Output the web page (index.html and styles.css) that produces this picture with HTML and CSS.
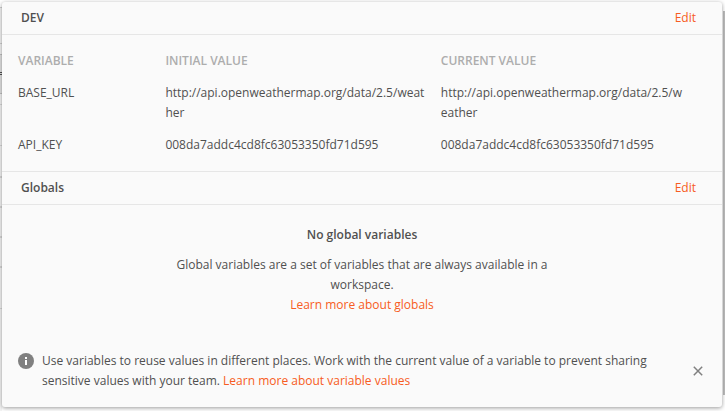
FILE: index.html
```html
<!DOCTYPE html>
<html lang="en">
<head>
<meta charset="utf-8">
<title>Environment quick look</title>
<link rel="stylesheet" href="styles.css">
</head>
<body>
<div class="backdrop"></div>
<main class="panel">
  <header class="section-header"><h2>DEV</h2><a class="link">Edit</a></header>
  <div class="variables">
    <span class="heading">VARIABLE</span><span class="heading">INITIAL VALUE</span><span class="heading">CURRENT VALUE</span>
    <span>BASE_URL</span><span>http://api.openweathermap.org/data/2.5/weat<br>her</span><span>http://api.openweathermap.org/data/2.5/w<br>eather</span>
    <span>API_KEY</span><span>008da7addc4cd8fc63053350fd71d595</span><span>008da7addc4cd8fc63053350fd71d595</span>
  </div>
  <header class="section-header globals-header"><h2>Globals</h2><a class="link">Edit</a></header>
  <section class="empty">
    <h3>No global variables</h3>
    <p>Global variables are a set of variables that are always available in a<br>workspace.<br><a class="link">Learn more about globals</a></p>
  </section>
  <footer class="tip">
    <svg class="info" viewBox="0 0 16 16"><circle cx="8" cy="8" r="8"/><path d="M7 4h2v2H7zM7 7h2v5H7z"/></svg>
    <p>Use variables to reuse values in different places. Work with the current value of a variable to prevent sharing<br>sensitive values with your team. <a class="link">Learn more about variable values</a></p>
    <svg class="close" viewBox="0 0 10 10"><path d="M.8.8l8.4 8.4M9.2.8L.8 9.2"/></svg>
  </footer>
</main>
<div class="scrollbar"></div>
</body>
</html>
```
FILE: styles.css
```css
* { box-sizing: border-box; }
body {
  margin: 0;
  height: 411px;
  padding: 2px 3px 4px 2px;
  overflow: hidden;
  background: #fff;
  font: 12px/20px "Open Sans", sans-serif;
  color: #505050;
}
h2, h3, p { margin: 0; font-size: 12px; }
h2, h3 { font-weight: 600; }

/* Edge of the page that shows behind the panel */
.backdrop {
  position: absolute;
  top: 0;
  left: 0;
  width: 2px;
  height: 411px;
  background: linear-gradient(
    #fff 7px, #d0d0d0 7px 8px, #f4f4f4 8px 43px, #d0d0d0 43px 44px,
    #f4f4f4 44px 54px, #c0c0c0 54px 55px, #e2e2e2 55px 72px,
    #505050 72px 73px, #e2e2e2 73px 74px, #505050 74px 75px,
    #e2e2e2 75px 93px, #c0c0c0 93px 94px, #f4f4f4 94px 104px,
    #d8d8d8 104px 105px, #f4f4f4 105px 145px, #d8d8d8 145px 146px,
    #f4f4f4 146px 176px, #d8d8d8 176px 178px, #f4f4f4 178px 206px,
    #d8d8d8 206px 208px, #f4f4f4 208px 236px, #d8d8d8 236px 238px,
    #f4f4f4 238px 266px, #d8d8d8 266px 268px, #f4f4f4 268px 308px,
    #d8d8d8 308px 309px, #f4f4f4 309px);
}
.panel {
  position: relative;
  z-index: 1;
  display: flex;
  flex-direction: column;
  width: 720px;
  height: 405px;
  background: #fafafa;
  border-radius: 3px;
  box-shadow: 0 1px 4px rgba(0, 0, 0, .4);
}
.link { color: #f75c22; }
.section-header {
  display: flex;
  flex: none;
  align-items: center;
  justify-content: space-between;
  height: 33px;
  padding: 0 26px 0 19px;
  border-bottom: 1px solid #e6e6e6;
}
.globals-header { height: 34px; border-top: 1px solid #e6e6e6; }
.variables {
  display: grid;
  grid-template-columns: 147.4px 275.4px 1fr;
  row-gap: 12px;
  padding: 16px;
}
.heading { font-weight: 600; color: #adadad; }
.empty { padding-top: 20px; text-align: center; }
.empty p { margin-top: 10px; }
.tip {
  display: flex;
  align-items: flex-start;
  margin-top: auto;
  padding: 0 19px 16px 16px;
}
.info { width: 16px; height: 16px; margin: 2px 8px 0 0; fill: #808080; }
.info path { fill: #fff; }
.tip p { white-space: nowrap; }
.close {
  width: 10px;
  height: 10px;
  margin: 15px 0 0 auto;
  fill: none;
  stroke: #808080;
  stroke-width: 1.5;
}
.scrollbar {
  position: absolute;
  top: 11px;
  right: 0;
  width: 2px;
  height: 384px;
  background: #bdbdbd;
}
```
